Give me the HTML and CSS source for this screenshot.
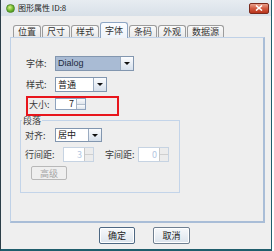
FILE: index.html
```html
<!DOCTYPE html>
<html lang="zh">
<head>
  <meta charset="UTF-8">
  <title>图形属性</title>
  <link rel="stylesheet" href="styles.css">
</head>
<body>
  <div class="window">
    <div class="titlebar">
      <span class="app-icon"></span>
      <span class="title">图形属性 ID:8</span>
      <span class="close">
        <svg width="8" height="6" viewBox="0 0 8 6"><path d="M1 0.5 L7 5.5 M7 0.5 L1 5.5" stroke="#fff" stroke-width="1.6"/></svg>
      </span>
    </div>

    <div class="tabs">
      <span class="tab">位置</span>
      <span class="tab">尺寸</span>
      <span class="tab">样式</span>
      <span class="tab active">字体</span>
      <span class="tab">条码</span>
      <span class="tab">外观</span>
      <span class="tab">数据源</span>
    </div>

    <div class="panel">
      <div class="row">
        <label class="lbl">字体:</label>
        <div class="combo combo-font">
          <span class="combo-value selected">Dialog</span>
          <span class="combo-arrow"><i class="tri"></i></span>
        </div>
      </div>
      <div class="row gap-top">
        <label class="lbl">样式:</label>
        <div class="combo combo-style">
          <span class="combo-value">普通</span>
          <span class="combo-arrow"><i class="tri"></i></span>
        </div>
      </div>

      <div class="highlight">
        <div class="row-inner">
          <label class="lbl lbl-size">大小:</label>
          <div class="spinner">
            <span class="spin-value">7</span>
            <span class="spin-btns"><span class="spin-up"></span><span class="spin-down"></span></span>
          </div>
        </div>
      </div>

      <fieldset class="group">
        <legend>段落</legend>
        <div class="row row-sm">
          <label class="lbl lbl-align">对齐:</label>
          <div class="combo combo-align">
            <span class="combo-value">居中</span>
            <span class="combo-arrow"><i class="tri"></i></span>
          </div>
        </div>
        <div class="row row-spacing">
          <label class="lbl lbl-line">行间距:</label>
          <div class="spinner disabled">
            <span class="spin-value">3</span>
            <span class="spin-btns"><span class="spin-up"></span><span class="spin-down"></span></span>
          </div>
          <label class="lbl lbl-char">字间距:</label>
          <div class="spinner disabled">
            <span class="spin-value">0</span>
            <span class="spin-btns"><span class="spin-up"></span><span class="spin-down"></span></span>
          </div>
        </div>
        <button class="btn-adv" disabled>高级</button>
      </fieldset>
    </div>

    <div class="actions">
      <button class="btn btn-ok">确定</button>
      <button class="btn btn-cancel">取消</button>
    </div>
  </div>
</body>
</html>
```

FILE: styles.css
```css
body { margin: 0; background: #fff; font-family: "Noto Sans CJK SC", "Noto Sans", sans-serif; font-size: 9px; color: #333; }

.window {
  width: 272px; height: 251px; box-sizing: border-box;
  background: #efefef;
  border-left: 1px solid #2c3e48;
  border-right: 1px solid #1f5d6c;
  border-bottom: 2px solid #1f5d6c;
}

/* title bar */
.titlebar {
  height: 16px; display: flex; align-items: center;
  padding: 0 2px 0 5px;
  background: linear-gradient(#e7ecf1, #d8e0e8);
}
.app-icon {
  width: 7px; height: 7px; border-radius: 50%;
  background: radial-gradient(circle at 40% 35%, #d8f28a, #6bb52a 55%, #2f7d16);
  border: 1px solid #4f8a2a;
}
.title { margin-left: 3px; font-size: 8px; color: #222; line-height: 16px; }
.close {
  margin-left: auto; width: 20px; height: 11px; box-sizing: border-box;
  display: flex; align-items: center; justify-content: center;
  background: linear-gradient(#eaa08c, #d25a40 50%, #b9341c);
  border: 1px solid #7b2a1c; border-radius: 2px;
}

/* tabs */
.tabs { display: flex; align-items: flex-end; height: 15px; margin-top: 6px; padding-left: 12px; }
.tab {
  height: 12px; box-sizing: border-box; line-height: 11px;
  padding: 0 4px; margin-right: 1px;
  border: 1px solid #9c9c9c; border-bottom: none; border-radius: 3px 3px 0 0;
  background: linear-gradient(#fafafa, #e9e9e9);
  color: #333;
}
.tab.active {
  height: 16px; line-height: 15px; margin-bottom: -1px; position: relative;
  background: linear-gradient(#fbfdff, #eef3f9);
  border-color: #8ea6c4;
}

/* panel */
.panel {
  width: 255px; height: 186px; box-sizing: border-box; margin-left: 9px;
  border: 1px solid #bfd1e7; border-right: 2px solid #a9bdd7; border-bottom: 2px solid #a9bdd7;
  background: #eeeeee;
  padding: 18px 0 0 9px;
}

.row { display: flex; align-items: center; height: 15px; margin-left: 6px; }
.gap-top { margin-top: 6px; }
.lbl { width: 29px; flex: none; color: #3a3a3a; }

.combo { display: flex; height: 15px; box-sizing: border-box; border: 1px solid #8296af; background: #fff; }
.combo-value { flex: 1; padding-left: 2px; line-height: 13px; color: #222; }
.combo-value.selected { background: #a9bbd4; font-family: "Liberation Sans", Arial, sans-serif; font-size: 9px; color: #1d2a3c; }
.combo-arrow {
  width: 12px; display: flex; align-items: center; justify-content: center;
  border-left: 1px solid #9aabc0;
  background: linear-gradient(#fbfcfe, #d6e0ec);
}
.tri { width: 0; height: 0; border-left: 3px solid transparent; border-right: 3px solid transparent; border-top: 3px solid #111; }
.combo-font { width: 79px; }
.combo-style { width: 52px; }

/* highlighted size row */
.highlight {
  width: 93px; height: 20px; box-sizing: border-box; margin: 4px 0 0 6px;
  border: 2px solid #e8161c; padding-left: 1px;
}
.row-inner { display: flex; align-items: center; height: 12px; }
.lbl-size { width: 26px; }

.spinner { display: flex; width: 31px; height: 12px; box-sizing: border-box; border: 1px solid #8ea2bd; background: #fff; }
.spin-value { flex: 1; text-align: right; padding-right: 2px; line-height: 10px; color: #222; }
.spin-btns { width: 8px; display: flex; flex-direction: column; border-left: 1px solid #a5b3c4; }
.spin-up, .spin-down { flex: 1; background: linear-gradient(#fbfcfd, #dfe5ec); }
.spin-up { border-bottom: 1px solid #b3bfcc; }

/* paragraph group */
.group {
  width: 160px; box-sizing: border-box; margin: -1px 0 0 0; min-width: 0;
  border: 1px solid #c3d4e9; padding: 2px 0 12px 4px;
}
.group legend { padding: 0 1px; margin-left: -3px; line-height: 11px; color: #3a3a3a; }
.group .row { margin-left: 0; }
.row-sm { height: 14px; }
.lbl-align { width: 30px; }
.combo-align { width: 47px; height: 14px; }
.combo-align .combo-value { line-height: 12px; }

.row-spacing { margin-top: 5px; }
.row-spacing .spinner { height: 15px; }
.row-spacing .spin-value { line-height: 13px; }
.lbl-line { width: 38px; }
.lbl-char { width: 33px; margin-left: 11px; }
.spinner.disabled { border-color: #c6d3e2; }
.spinner.disabled .spin-value { color: #b4c8e2; }
.spinner.disabled .spin-btns { border-left-color: #c8c8c8; }
.spinner.disabled .spin-up, .spinner.disabled .spin-down { background: #ececec; }
.spinner.disabled .spin-up { border-bottom-color: #cfcfcf; }

.btn-adv {
  display: block; width: 36px; height: 14px; margin: 4px 0 0 6px; padding: 0;
  border: 1px solid #b8b8b8; border-radius: 2px; background: #efefef;
  font-family: inherit; font-size: 9px; color: #a6a6a6;
}

/* dialog buttons */
.actions { display: flex; gap: 18px; padding-left: 98px; margin-top: 4px; }
.btn {
  height: 17px; padding: 0; border: 1px solid #6f7f90; border-radius: 2px;
  background: linear-gradient(#f7f9fb, #dce4ed);
  box-shadow: inset 0 0 0 1px #fff;
  font-family: inherit; font-size: 9px; color: #222;
}
.btn-ok { width: 36px; border-color: #4d6782; }
.btn-cancel { width: 37px; }
```
